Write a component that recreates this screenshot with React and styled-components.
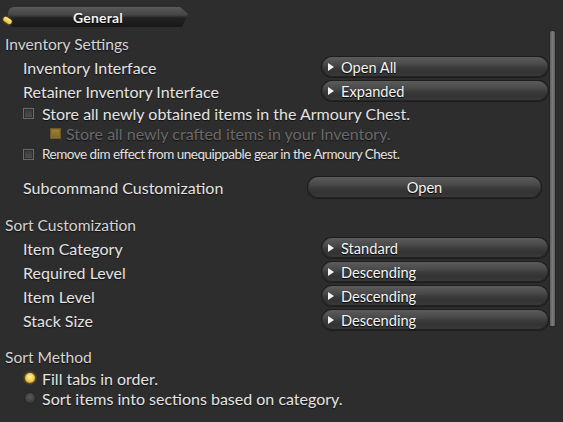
import React from "react";
import styled, { createGlobalStyle } from "styled-components";

const Global = createGlobalStyle`
  html, body { margin: 0; padding: 0; background: #2c2c2c; }
  body { font-family: Lato, "Open Sans", sans-serif; }
`;

const Window = styled.div`
  width: 563px;
  height: 422px;
  overflow: hidden;
  display: flex;
  background: #2d2d2d;
  color: #e2e2e2;
`;

const Content = styled.div`
  width: 549px;
  display: flex;
  flex-direction: column;
`;

const ScrollColumn = styled.div`
  width: 14px;
  padding: 31px 0 0 1px;
  box-sizing: border-box;
`;

const Thumb = styled.div`
  width: 5px;
  height: 295px;
  border-radius: 2px 2px 1px 1px;
  background: linear-gradient(90deg, #5e5e5e, #7a7a7a 50%, #5e5e5e);
  box-shadow: 0 0 0 1px #262626;
`;

const TabBar = styled.div`
  padding: 7px 0 0 8px;
  height: 20px;
  position: relative;
`;

const Tab = styled.div`
  width: 180px;
  height: 20px;
  box-sizing: border-box;
  display: flex;
  align-items: center;
  justify-content: center;
  clip-path: polygon(0 0, 172px 0, 180px 7px, 174px 20px, 0 20px);
  border-radius: 6px 0 0 6px;
  background: linear-gradient(180deg, #5a5a5a 0%, #454545 40%, #222 55%, #181818 100%);
  color: #f4f4f4;
  font-size: 14px;
  font-weight: 700;
  text-shadow: 0 1px 1px #000;
  letter-spacing: 0.2px;
`;

const Marker = styled.div`
  position: absolute;
  left: 3px;
  top: 18px;
  width: 9px;
  height: 5px;
  border-radius: 3px;
  background: linear-gradient(180deg, #fff2a0, #e8b820);
  transform: rotate(32deg);
  box-shadow: 0 0 2px #b08010;
`;

const SectionTitle = styled.div`
  height: ${(p) => p.$h || 22}px;
  margin-top: ${(p) => p.$mt || 0}px;
  padding-left: 5px;
  display: flex;
  align-items: center;
  font-size: 15.6px;
  color: #d4d4d4;
  text-shadow: 0 1px 1px #111;
`;

const Row = styled.div`
  height: ${(p) => p.$h || 24}px;
  margin-top: ${(p) => p.$mt || 0}px;
  padding-left: ${(p) => p.$indent || 23}px;
  display: flex;
  align-items: center;
`;

const Label = styled.div`
  width: ${(p) => p.$w || 299}px;
  flex-shrink: 0;
  font-size: 16px;
  color: #e4e4e4;
  text-shadow: 0 1px 1px #111;
`;

const Dropdown = styled.div`
  width: 226px;
  height: 20px;
  box-sizing: border-box;
  border-radius: 10px;
  display: flex;
  align-items: center;
  gap: 7px;
  padding-left: 6px;
  background: linear-gradient(180deg, #5c5c5c 0%, #4a4a4a 35%, #3a3a3a 55%, #333 75%, #3d3d3d 100%);
  box-shadow: 0 0 0 1px #1c1c1c, inset 0 -1px 1px #222;
  color: #f6f6f6;
  font-size: 14.6px;
  text-shadow: 0 1px 1px #000;
`;

const Arrow = styled.span`
  width: 0;
  height: 0;
  border-left: 6px solid #f2f2f2;
  border-top: 4px solid transparent;
  border-bottom: 4px solid transparent;
`;

const Button = styled.div`
  width: 233px;
  height: 21px;
  box-sizing: border-box;
  border-radius: 10px;
  display: flex;
  align-items: center;
  justify-content: center;
  background: linear-gradient(180deg, #5c5c5c 0%, #4a4a4a 35%, #3a3a3a 55%, #333 75%, #3d3d3d 100%);
  box-shadow: 0 0 0 1px #1c1c1c, inset 0 -1px 1px #222;
  color: #f6f6f6;
  font-size: 14.6px;
  text-shadow: 0 1px 1px #000;
`;

const Check = styled.span`
  width: 9px;
  height: 9px;
  flex-shrink: 0;
  margin-right: ${(p) => p.$mr || 8}px;
  border: 1px solid ${(p) => (p.$gold ? "#6e5a28" : "#6a6a6a")};
  background: ${(p) =>
    p.$gold
      ? "linear-gradient(180deg, #a08436, #7c6428)"
      : "linear-gradient(180deg, #3a3a3a, #4e4e4e)"};
  box-shadow: inset 0 0 0 1px ${(p) => (p.$gold ? "#8a7030" : "#2e2e2e")};
`;

const CheckText = styled.span`
  font-size: ${(p) => (p.$small ? 13.5 : 16)}px;
  letter-spacing: ${(p) => (p.$small ? "-0.5px" : "0")};
  color: ${(p) => (p.$dim ? "#6a6a6a" : "#e4e4e4")};
  text-shadow: 0 1px 1px #111;
  white-space: nowrap;
`;

const Radio = styled.span`
  width: 10px;
  height: 10px;
  border-radius: 50%;
  flex-shrink: 0;
  margin-right: 7px;
  background: ${(p) =>
    p.$on
      ? "radial-gradient(circle at 50% 40%, #fff4b0 0%, #f2c640 55%, #b88a18 100%)"
      : "radial-gradient(circle at 50% 40%, #5a5a5a 0%, #3c3c3c 70%, #2a2a2a 100%)"};
  box-shadow: ${(p) => (p.$on ? "0 0 3px #c89a20" : "0 0 1px #111")};
`;

const settings = [
  ["Inventory Interface", "Open All"],
  ["Retainer Inventory Interface", "Expanded"],
];

const sorts = [
  ["Item Category", "Standard"],
  ["Required Level", "Descending"],
  ["Item Level", "Descending"],
  ["Stack Size", "Descending"],
];

function Select({ value }) {
  return (
    <Dropdown>
      <Arrow />
      {value}
    </Dropdown>
  );
}

export default function App() {
  return (
    <Window>
      <Global />
      <Content>
        <TabBar>
          <Tab>General</Tab>
          <Marker />
        </TabBar>
        <SectionTitle $mt={6}>Inventory Settings</SectionTitle>
        {settings.map(([l, v]) => (
          <Row key={l}>
            <Label>{l}</Label>
            <Select value={v} />
          </Row>
        ))}
        <Row $h={21}>
          <Check />
          <CheckText>Store all newly obtained items in the Armoury Chest.</CheckText>
        </Row>
        <Row $h={19} $indent={50}>
          <Check $gold $mr={5} />
          <CheckText $dim>Store all newly crafted items in your Inventory.</CheckText>
        </Row>
        <Row $h={22}>
          <Check />
          <CheckText $small>Remove dim effect from unequippable gear in the Armoury Chest.</CheckText>
        </Row>
        <Row $mt={10}>
          <Label $w={285}>Subcommand Customization</Label>
          <Button>Open</Button>
        </Row>
        <SectionTitle $mt={15}>Sort Customization</SectionTitle>
        {sorts.map(([l, v]) => (
          <Row key={l}>
            <Label>{l}</Label>
            <Select value={v} />
          </Row>
        ))}
        <SectionTitle $mt={14}>Sort Method</SectionTitle>
        <Row $h={20} $indent={25}>
          <Radio $on />
          <CheckText>Fill tabs in order.</CheckText>
        </Row>
        <Row $h={20} $indent={25}>
          <Radio />
          <CheckText>Sort items into sections based on category.</CheckText>
        </Row>
      </Content>
      <ScrollColumn>
        <Thumb />
      </ScrollColumn>
    </Window>
  );
}
